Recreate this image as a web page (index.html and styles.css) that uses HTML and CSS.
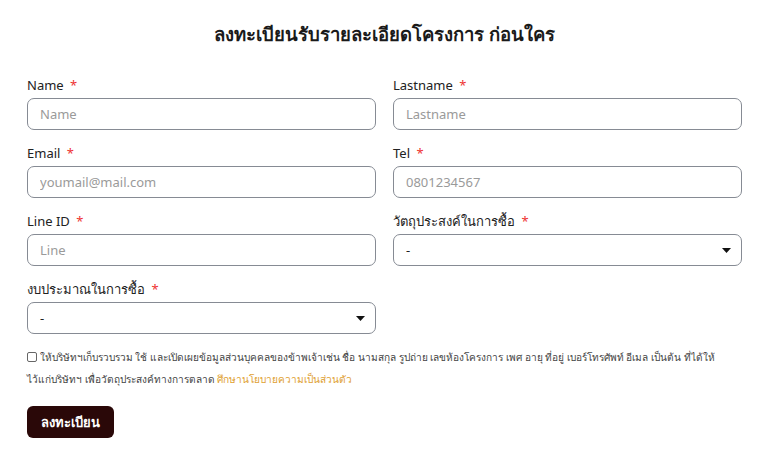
FILE: index.html
```html
<!DOCTYPE html>
<html lang="th">
<head>
<meta charset="utf-8">
<link rel="stylesheet" href="styles.css">
</head>
<body>
<main class="page">
  <h1 class="title">ลงทะเบียนรับรายละเอียดโครงการ ก่อนใคร</h1>
  <form class="form">
    <div class="grid">
      <div class="field">
        <label class="label">Name <span class="req">*</span></label>
        <input class="input" type="text" placeholder="Name">
      </div>
      <div class="field">
        <label class="label">Lastname <span class="req">*</span></label>
        <input class="input" type="text" placeholder="Lastname">
      </div>
      <div class="field">
        <label class="label">Email <span class="req">*</span></label>
        <input class="input" type="text" placeholder="youmail@mail.com">
      </div>
      <div class="field">
        <label class="label">Tel <span class="req">*</span></label>
        <input class="input" type="text" placeholder="0801234567">
      </div>
      <div class="field">
        <label class="label">Line ID <span class="req">*</span></label>
        <input class="input" type="text" placeholder="Line">
      </div>
      <div class="field">
        <label class="label">วัตถุประสงค์ในการซื้อ <span class="req">*</span></label>
        <div class="select"><span>-</span><svg class="caret" width="9" height="5" viewBox="0 0 9 5"><path d="M0 0H9L4.5 5Z" fill="#111"/></svg></div>
      </div>
      <div class="field">
        <label class="label">งบประมาณในการซื้อ <span class="req">*</span></label>
        <div class="select"><span>-</span><svg class="caret" width="9" height="5" viewBox="0 0 9 5"><path d="M0 0H9L4.5 5Z" fill="#111"/></svg></div>
      </div>
    </div>
    <p class="consent"><span class="box"></span> ให้บริษัทฯเก็บรวบรวม ใช้ และเปิดเผยข้อมูลส่วนบุคคลของข้าพเจ้าเช่น ชื่อ นามสกุล รูปถ่าย เลขห้องโครงการ เพศ อายุ ที่อยู่ เบอร์โทรศัพท์ อีเมล เป็นต้น <span class="nw">ที่ได้ให้</span><span class="nw">ไว้แก่บริษัทฯ</span> เพื่อวัตถุประสงค์ทางการตลาด <a class="link">ศึกษานโยบายความเป็นส่วนตัว</a></p>
    <button class="btn" type="button">ลงทะเบียน</button>
  </form>
</main>
</body>
</html>
```
FILE: styles.css
```css
* { box-sizing: border-box; }
body {
  margin: 0;
  background: #fff;
  font-family: "Noto Sans", "Open Sans", sans-serif;
  color: #222;
}
.page {
  padding: 20px 26px 0 27px;
}
.title {
  margin: 0 0 27px;
  text-align: center;
  font-size: 18.5px;
  font-weight: 700;
  line-height: 28px;
  color: #1a1a1a;
}
.grid {
  display: grid;
  grid-template-columns: 1fr 1fr;
  column-gap: 17px;
  row-gap: 13px;
}
.field {
  display: flex;
  flex-direction: column;
  gap: 3px;
}
.label {
  font-size: 13px;
  line-height: 20px;
  color: #222;
}
.req { color: #e33; margin-left: 3px; }
.input, .select {
  height: 32px;
  border: 1px solid #868b94;
  border-radius: 7px;
  padding: 0 12px;
  font-family: inherit;
  font-size: 13px;
  color: #222;
  background: #fff;
}
.input::placeholder { color: #9a9a9a; }
.select {
  display: flex;
  align-items: center;
  justify-content: space-between;
  padding-right: 10px;
}
.consent {
  margin: 12px 0 0;
  font-size: 10.1px;
  line-height: 22px;
  color: #444;
}
.nw { white-space: nowrap; }
.box {
  display: inline-block;
  width: 10px;
  height: 10px;
  border: 1px solid #666;
  border-radius: 2px;
  vertical-align: -1px;
}
.link { color: #e0a030; }
.btn {
  margin-top: 16px;
  height: 32px;
  padding: 0 14px;
  border: 0;
  border-radius: 6px;
  background: #2a0808;
  color: #fff;
  font-family: inherit;
  font-size: 13px;
  font-weight: 700;
}
```
